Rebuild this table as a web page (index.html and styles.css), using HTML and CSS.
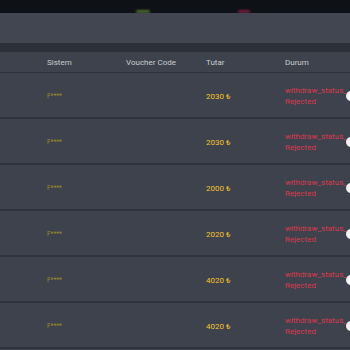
FILE: index.html
```html
<!DOCTYPE html>
<html lang="en">
<head>
    <meta charset="UTF-8">
    <meta name="viewport" content="width=device-width, initial-scale=1.0">
    <title>Withdraw History</title>
    <link rel="stylesheet" href="styles.css">
</head>
<body>
    <div class="topbar">
        <i class="tab tab-green"></i>
        <i class="tab tab-red"></i>
    </div>
    <div class="toolbar"></div>
    <div class="divider"></div>

    <div class="table">
        <div class="row head">
            <div></div>
            <div>Sistem</div>
            <div>Voucher Code</div>
            <div>Tutar</div>
            <div>Durum</div>
        </div>
        <div class="row">
            <div></div>
            <div class="system">F****</div>
            <div></div>
            <div class="amount">2030 ₺</div>
            <div class="status"><span>withdraw_status_ Rejected</span><i class="dot"></i></div>
        </div>
        <div class="row">
            <div></div>
            <div class="system">F****</div>
            <div></div>
            <div class="amount">2030 ₺</div>
            <div class="status"><span>withdraw_status_ Rejected</span><i class="dot"></i></div>
        </div>
        <div class="row">
            <div></div>
            <div class="system">F****</div>
            <div></div>
            <div class="amount">2000 ₺</div>
            <div class="status"><span>withdraw_status_ Rejected</span><i class="dot"></i></div>
        </div>
        <div class="row">
            <div></div>
            <div class="system">F****</div>
            <div></div>
            <div class="amount">2020 ₺</div>
            <div class="status"><span>withdraw_status_ Rejected</span><i class="dot"></i></div>
        </div>
        <div class="row">
            <div></div>
            <div class="system">F****</div>
            <div></div>
            <div class="amount">4020 ₺</div>
            <div class="status"><span>withdraw_status_ Rejected</span><i class="dot"></i></div>
        </div>
        <div class="row">
            <div></div>
            <div class="system">F****</div>
            <div></div>
            <div class="amount">4020 ₺</div>
            <div class="status"><span>withdraw_status_ Rejected</span><i class="dot"></i></div>
        </div>
    </div>
</body>
</html>
```

FILE: styles.css
```css
* {
    margin: 0;
    padding: 0;
    box-sizing: border-box;
    font-family: Roboto, "Liberation Sans", sans-serif;
}

body {
    width: 350px;
    height: 350px;
    overflow: hidden;
    background: #3e424c;
}

.topbar {
    height: 13px;
    background: #0e1116;
    position: relative;
    overflow: hidden;
}

.tab {
    position: absolute;
    top: 10px;
    height: 3px;
    border-radius: 2px;
    filter: blur(1px);
}

.tab-green {
    left: 136px;
    width: 14px;
    background: #4a6e2a;
}

.tab-red {
    left: 238px;
    width: 12px;
    background: #7a1c3a;
}

.toolbar {
    height: 30px;
    background: #424650;
}

.divider {
    height: 9px;
    background: #2c3038;
}

.row {
    display: grid;
    grid-template-columns: 47px 79px 80px 79px 1fr;
    align-items: center;
    height: 46px;
    padding-top: 2px;
    border-bottom: 2px solid #30333b;
    font-size: 8px;
}

.row.head {
    height: 21px;
    padding-top: 0;
    color: #c9ccd2;
    border-bottom: 1px solid #2e3139;
}

.system {
    color: #9c8a2c;
    font-size: 6.5px;
}

.amount {
    color: #f2c431;
    font-size: 8px;
}

.status {
    display: flex;
    align-items: center;
    color: #d93a4f;
    line-height: 11px;
}

.status span {
    width: 58px;
}

.dot {
    width: 10px;
    height: 10px;
    border-radius: 50%;
    background: #f4f4f4;
    margin-left: 3px;
    flex-shrink: 0;
}
```
